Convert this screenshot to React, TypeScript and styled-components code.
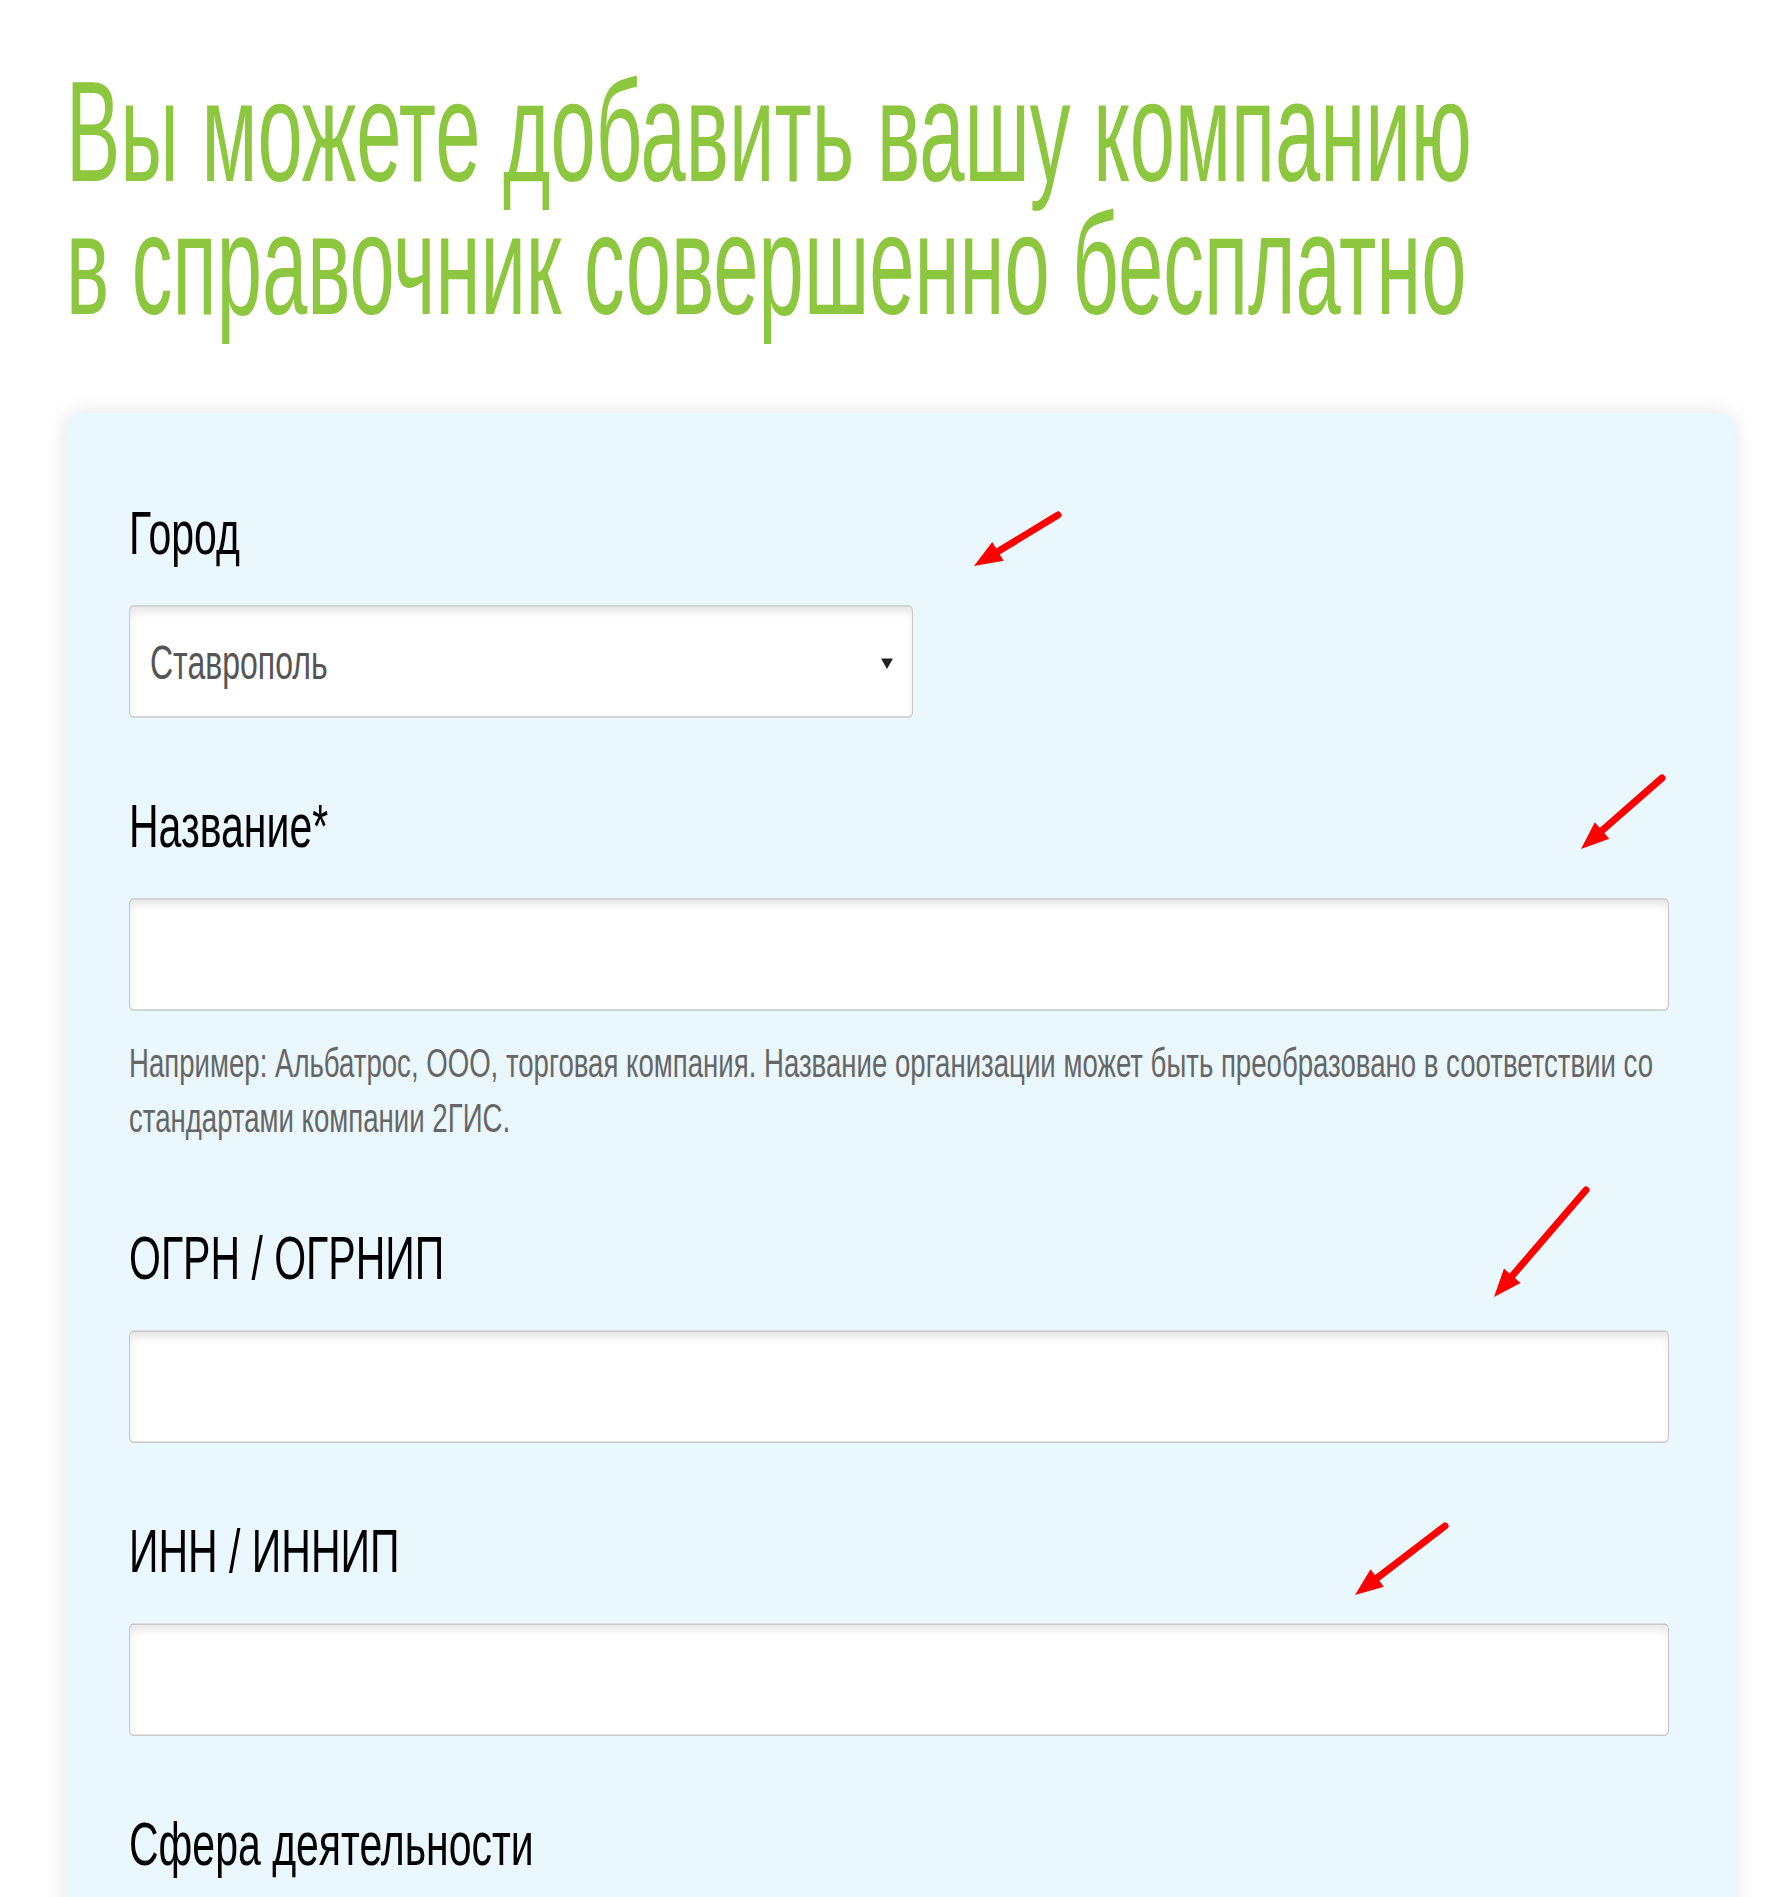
import React from "react";
import styled, { createGlobalStyle } from "styled-components";

// the reference is a vertically stretched screenshot, so the page is laid out
// at natural size and stretched once on the wrapper
const STRETCH = 1.48;

const GlobalStyle = createGlobalStyle`
  html, body {
    margin: 0;
    padding: 0;
    background: #ffffff;
    overflow: hidden;
  }
`;

const Stage = styled.div`
  position: relative;
  width: 1767px;
  height: 1897px;
  overflow: hidden;
  background: #ffffff;
`;

const Page = styled.div`
  width: 1767px;
  transform: scaleY(${STRETCH});
  transform-origin: 0 0;
  font-family: "Liberation Sans", Arial, sans-serif;
`;

// no narrow face is installed, so the heading is squeezed to a narrow width
const Heading = styled.h1`
  margin: 0;
  padding: 44px 0 0 66px;
  font-size: 96px;
  line-height: 90px;
  font-weight: 400;
  color: #8dc63f;
  white-space: nowrap;
  transform: scaleX(0.848);
  transform-origin: 66px 0;
`;

const Panel = styled.form`
  box-sizing: border-box;
  width: 1670px;
  margin: 55px 0 0 65px;
  padding: 61px 66px 160px 64px;
  background: #eaf7fd;
  border-radius: 12px;
  box-shadow: 0 0 18px rgba(0, 0, 0, 0.11);
`;

const Field = styled.div`
  & + & {
    margin-top: 53px;
  }
`;

const Label = styled.label`
  display: block;
  margin-bottom: 29px;
  font-size: 41px;
  line-height: 40px;
  color: #000000;
`;

const Box = styled.div<{ $width?: number }>`
  box-sizing: border-box;
  display: flex;
  align-items: center;
  width: ${({ $width }) => ($width ? `${$width}px` : "100%")};
  height: 76px;
  padding: 0 19px 0 20px;
  background: #ffffff;
  border: 1px solid #c8c8c8;
  border-radius: 4px;
  box-shadow: inset 0 4px 6px rgba(0, 0, 0, 0.09);
`;

const SelectValue = styled.span`
  flex: 1;
  font-size: 32px;
  color: #555555;
  padding-top: 2px;
`;

const Caret = styled.span`
  width: 0;
  height: 0;
  border-left: 6px solid transparent;
  border-right: 6px solid transparent;
  border-top: 7px solid #222222;
  margin-top: 2px;
`;

const Hint = styled.p`
  margin: 17px 0 0;
  padding-bottom: 2.5px;
  font-size: 27.6px;
  line-height: 37px;
  color: #666666;
`;

const Arrows = styled.svg`
  position: absolute;
  top: 0;
  left: 0;
  pointer-events: none;
`;

type Arrow = { tail: [number, number]; tip: [number, number] };

const arrows: Arrow[] = [
  { tail: [1058, 515], tip: [974, 566] },
  { tail: [1662, 778], tip: [1581, 849] },
  { tail: [1586, 1190], tip: [1494, 1297] },
  { tail: [1445, 1526], tip: [1355, 1595] },
];

const RedArrow = ({ tail, tip }: Arrow) => {
  const dx = tip[0] - tail[0];
  const dy = tip[1] - tail[1];
  const len = Math.hypot(dx, dy);
  const ux = dx / len;
  const uy = dy / len;
  const head = 28;
  const half = 11;
  const bx = tip[0] - ux * head;
  const by = tip[1] - uy * head;
  const points = [
    `${tip[0]},${tip[1]}`,
    `${bx - uy * half},${by + ux * half}`,
    `${bx + uy * half},${by - ux * half}`,
  ].join(" ");

  return (
    <g>
      <line
        x1={tail[0]}
        y1={tail[1]}
        x2={bx + ux * 4}
        y2={by + uy * 4}
        stroke="#ff0000"
        strokeWidth={7}
        strokeLinecap="round"
      />
      <polygon points={points} fill="#ff0000" />
    </g>
  );
};

const App = () => (
  <Stage>
    <GlobalStyle />
    <Page>
      <Heading>
        Вы можете добавить вашу компанию
        <br />в справочник совершенно бесплатно
      </Heading>
      <Panel>
        <Field>
          <Label>Город</Label>
          <Box $width={784}>
            <SelectValue>Ставрополь</SelectValue>
            <Caret />
          </Box>
        </Field>
        <Field>
          <Label>Название*</Label>
          <Box />
          <Hint>
            Например: Альбатрос, ООО, торговая компания. Название организации
            может быть преобразовано в соответствии со стандартами компании
            2ГИС.
          </Hint>
        </Field>
        <Field>
          <Label>ОГРН / ОГРНИП</Label>
          <Box />
        </Field>
        <Field>
          <Label>ИНН / ИННИП</Label>
          <Box />
        </Field>
        <Field>
          <Label>Сфера деятельности</Label>
        </Field>
      </Panel>
    </Page>
    <Arrows width={1767} height={1897} viewBox="0 0 1767 1897">
      {arrows.map((a, i) => (
        <RedArrow key={i} {...a} />
      ))}
    </Arrows>
  </Stage>
);

export default App;
